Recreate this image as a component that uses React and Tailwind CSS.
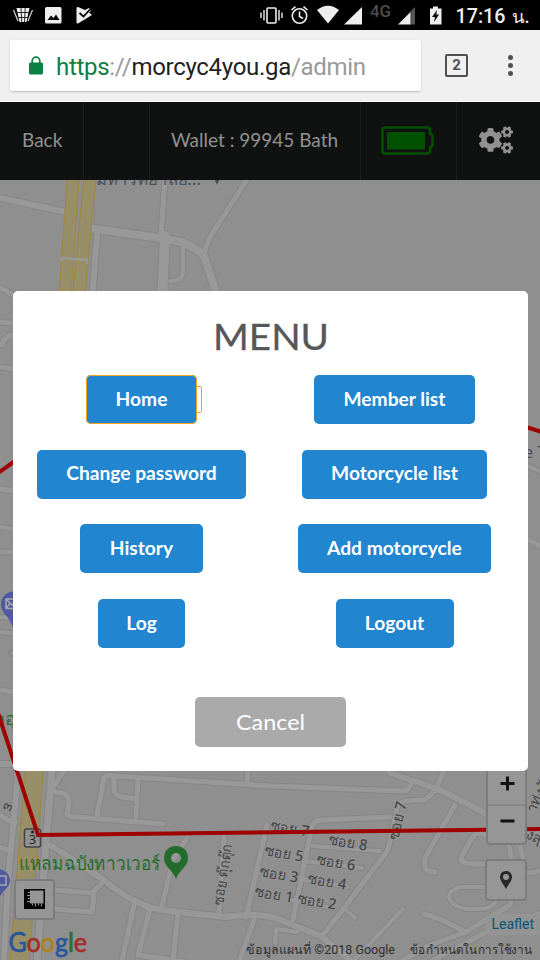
import React from 'react';
import { FaCogs } from 'react-icons/fa';

const roads = [
  ['M0 198L66 212', 6], ['M88 228L160 238Q190 241 204 256L222 310', 8], ['M97 235L92 300', 6],
  ['M165 180L161 235', 5], ['M165 236L162 300', 10], ['M183 240V272Q183 281 170 281', 4],
  ['M248 178L210 237L204 253', 5], ['M92 210L91 228', 4], ['M0 288Q10 293 14 296', 5],
  ['M0 322L20 324', 5], ['M2 345Q4 334 20 334', 5], ['M0 367L20 370', 5], ['M0 489L20 492', 5],
  ['M0 527L20 530', 4], ['M0 552H20', 4], ['M0 617L20 619', 4], ['M0 632L20 634', 4], ['M0 690L20 693', 5],
  ['M528 466L545 474', 4], ['M526 538L545 549', 5],
  ['M0 764H16Q18 768 17 785L8 880L4 960', 6], ['M0 815Q8 822 16 822M0 847L12 851', 5],
  ['M52 770L47 830L37 960', 7], ['M65 770L50 791L63 793Q70 796 69 803L67 814Q68 817 76 817L163 824', 5],
  ['M97 815L104 778Q106 774 116 776L270 786L405 791Q410 789 412 781', 5],
  ['M114 778V790Q114 795 122 797L136 799M138 779L136 817M248 770L247 784', 5],
  ['M50 845L104 880Q130 903 160 910L226 917Q267 911 288 923L321 936L350 960', 6],
  ['M161 910L173 860L187 838', 5], ['M219 912L224 835', 5], ['M246 917L267 825', 5],
  ['M293 920L312 826Q315 820 322 820L390 817', 5],
  ['M312 846L380 851M304 861L362 868M297 878L348 887M292 900L332 908', 4],
  ['M322 936L344 908L388 850L398 804Q402 800 425 800L436 790L444 770', 5],
  ['M344 908L355 918M403 909L354 960M298 932L276 929L275 943', 4],
  ['M55 890L92 893L103 882M55 909L92 912L94 894', 5], ['M134 905L122 960M150 909L138 955L185 962M178 913L173 960M254 920L239 962', 5],
  ['M390 773L440 790L493 817L540 835', 6], ['M455 805L426 856Q420 872 435 872', 5],
  ['M493 837L477 833Q474 832 461 858Q460 864 475 864H493M505 838Q512 848 511 865', 5],
  ['M492 887H460Q446 892 450 900Q456 910 477 909Q495 910 500 894', 4],
  ['M424 914L440 919L466 932L430 945L400 962M466 932L510 905L518 875L545 870M518 835L525 870', 5],
];
const side = 'M430 962L490 930L545 912';

const labels = [
  ['ซอย 7', 270, 830, 10], ['ซอย 8', 328, 844, 10], ['ซอย 5', 264, 855, 10], ['ซอย 6', 316, 864, 10],
  ['ซอย 3', 259, 876, 10], ['ซอย 4', 307, 883, 10], ['ซอย 1', 254, 896, 10], ['ซอย 2', 297, 903, 10],
];

function MapCanvas() {
  return (
    <svg className="absolute inset-0 h-[780px] w-[540px]" viewBox="0 180 540 780" fontFamily="'Noto Sans','Noto Sans CJK SC',sans-serif">
      <rect y="180" width="540" height="780" fill="#8f8f8f" />
      <g fill="none" strokeLinecap="round" strokeLinejoin="round">
        <g stroke="#868686">
          <path d={side} strokeWidth="7" />
          {roads.map(([d, w]) => <path key={d} d={d} strokeWidth={w + 2} />)}
        </g>
        <g stroke="#989898">
          <path d={side} strokeWidth="5" />
          {roads.map(([d, w]) => <path key={d} d={d} strokeWidth={w} />)}
        </g>
      </g>
      <g fill="#978f68" stroke="#a38439" strokeWidth="1">
        <path d="M67.500 178L58.500 300H70.500L79 178Z" />
        <path d="M84 178L72 300H84.500L96 178Z" />
        <path d="M26 760L10 962H29L44 760Z" />
      </g>
      <path d="M62 261V258L87 260V264" fill="none" stroke="#999" strokeWidth="2.500" />
      <g fill="#46525e" fontSize="17">
        <text x="96" y="184.500" fontWeight="500" textLength="105" lengthAdjust="spacingAndGlyphs">มหาวิทยาลัย...</text>
        <path d="M214 178H220L217 185Z" />
        <text x="524" y="458" fontSize="16">e T</text>
      </g>
      <g fill="#505aa0">
        <path d="M13 591.500A12.500 12.500 0 0 0 1 605C1 613 9 615 13 628Z" />
        <path d="M-2 869A12 12 0 0 1 10 881C9 889 2 890 0 897H-2Z" />
      </g>
      <g fill="none" stroke="#aaa" strokeWidth="1.500">
        <path d="M6 599H18V608.500H6ZM6 599L12 605L18 599M6 608.500L10 603.500" />
        <path d="M-2 876H6V885H-2" />
        <circle cx="12" cy="653" r="3.500" strokeWidth="1" stroke="#808080" />
      </g>
      <g fontSize="15" fontWeight="500" fill="#434343" stroke="#999" strokeWidth="1.500" paintOrder="stroke">
        {labels.map(([t, x, y, r]) => (
          <text key={t} x={x} y={y} transform={`rotate(${r} ${x} ${y})`} textLength="39" lengthAdjust="spacingAndGlyphs">{t}</text>
        ))}
        <text transform="translate(398 841) rotate(-77)" textLength="39" lengthAdjust="spacingAndGlyphs">ซอย 7</text>
        <text transform="translate(223 906) rotate(-81)" textLength="62" lengthAdjust="spacingAndGlyphs">ซอย ตุ๊กตุ๊ก</text>
        <text transform="translate(2 808) rotate(25)" fontSize="14">๓</text>
        <text transform="translate(535 814) rotate(-65)">าทุ่งรั</text>
        <text transform="translate(525 838) rotate(22)">งสุข</text>
      </g>
      <g fill="#246c2b" fontWeight="500">
        <text x="-5" y="725" fontSize="18">าอุ</text>
        <text x="19" y="870" fontSize="19" textLength="141" lengthAdjust="spacingAndGlyphs">แหลมฉบังทาวเวอร์</text>
        <path fillRule="evenodd" d="M176 846C168 846 164 852 164 858C164 867 173 870 176 879C179 870 188 867 188 858C188 852 184 846 176 846ZM176 853A5 5 0 1 1 176 863A5 5 0 1 1 176 853Z" />
      </g>
      <rect x="24.500" y="829" width="16" height="18" rx="2" fill="#929292" stroke="#444" strokeWidth="1.500" />
      <text x="32.500" y="843.500" textAnchor="middle" fontSize="13" fill="#222">3</text>
      <circle cx="32.500" cy="832" r="1.500" fill="#222" />
      <path d="M-2 473L15 461M526 427L542 432M-2 713L38 835L542 829" fill="none" stroke="#9f0000" strokeWidth="4" />
    </svg>
  );
}

function StatusBar() {
  return (
    <header className="flex h-[30px] shrink-0 bg-black">
      <svg className="h-[30px] w-[540px]" viewBox="0 0 540 30" fill="#eee">
        <path d="M16.500 8H29.500L26.500 22H19.500Z" />
        <path d="M16 12.500H30M17 17.500H29M21 8L21.700 22M25.200 8L24.500 22" stroke="#000" strokeWidth=".8" />
        <path d="M13.500 10L18 21M32.500 10L28 21" stroke="#ccc" strokeWidth="1.300" />
        <rect x="45" y="7" width="16.500" height="16.500" rx="1.500" />
        <path d="M47.500 20L51 15.500L53.500 18L56 14.500L59.500 20Z" fill="#000" />
        <path d="M78 7L85 10L89 8L91 11L89 12.500L92 15L78 23.500Q76.500 24 76.500 22V8.500Q76.500 6.500 78 7Z" />
        <path d="M79.500 13L83.500 16.500L90 9.500" fill="none" stroke="#000" strokeWidth="1.800" />
        <path d="M261 12.500V18M264 10V20.500M279 10V20.500M282 12.500V18" stroke="#eee" strokeWidth="1.400" />
        <rect x="267" y="8" width="9" height="15" rx="1" fill="none" stroke="#eee" strokeWidth="1.600" />
        <g fill="none" stroke="#eee" strokeWidth="1.600">
          <circle cx="299.500" cy="16" r="7.200" />
          <path d="M299.500 11.500V16.500L303 18.500M291.500 10L295.500 6.700M307.500 10L303.500 6.700" />
        </g>
        <path d="M317 10Q328 1.500 339 10L328 23.500Z" />
        <path d="M344 24.500L362 7V24.500Z" />
        <text x="370" y="16.500" fill="#4d4d4d" fontFamily="Roboto, sans-serif" fontWeight="500" fontSize="16" textLength="21" lengthAdjust="spacingAndGlyphs">4G</text>
        <path d="M410.500 11.500L415 7V24.500H410.500Z" fill="#555" />
        <path d="M398 24.500L410.500 12V24.500Z" />
        <path d="M430 8.500H433V6.500H438V8.500H441.500V24.500H430Z" />
        <path d="M437 10L432 17H435L434 22L439 14.500H436.300Z" fill="#000" />
        <text x="455.500" y="22.500" fontFamily="Roboto, sans-serif" fontWeight="500" fontSize="20" textLength="50" lengthAdjust="spacingAndGlyphs">17:16</text>
        <text x="511.500" y="22.500" fontFamily="'Noto Sans', sans-serif" fontWeight="500" fontSize="17" textLength="18" lengthAdjust="spacingAndGlyphs">น.</text>
      </svg>
    </header>
  );
}

function AddressBar() {
  return (
    <div className="flex h-[72px] shrink-0 items-center border-b border-white bg-[#f0f0f0] pl-[10px] font-['Roboto',sans-serif]">
      <div className="flex h-[51px] w-[411px] items-center rounded-xs bg-white pl-[18px] shadow-[0_1px_2px_#bbb]">
        <svg className="mb-[1px] h-[19px] w-[16px]" viewBox="0 0 16 19">
          <rect x="1" y="6.500" width="14" height="12" rx="1.500" fill="#0b8043" />
          <path d="M4.200 8V5A3.800 3.800 0 0 1 11.800 5V8" fill="none" stroke="#0b8043" strokeWidth="1.700" />
        </svg>
        <span className="mt-[2px] ml-[12px] whitespace-nowrap text-[24px] leading-[30px] tracking-[-0.300px] text-[#999]">
          <span className="text-[#0b8043]">https</span>://<span className="text-[#222]">morcyc4you.ga</span>/admin
        </span>
      </div>
      <div className="ml-[24px] flex size-[23px] items-center justify-center rounded-[2px] border-2 border-[#505050] text-[15px] font-bold text-[#505050]">2</div>
      <div className="ml-[40px] flex flex-col gap-[3px]">
        <i className="size-[5px] rounded-full bg-[#505050]" /><i className="size-[5px] rounded-full bg-[#505050]" /><i className="size-[5px] rounded-full bg-[#505050]" />
      </div>
    </div>
  );
}

function NavBar() {
  return (
    <nav className="flex h-[78px] shrink-0 items-stretch bg-[#101111] text-[19px] text-[#919191]">
      <div className="flex w-[84px] items-center border-r border-[#1c1d1d] pb-[1px] pl-[22px]">Back</div>
      <div className="w-[66px] border-r border-[#1c1d1d]" />
      <div className="flex w-[211px] items-center border-r border-[#1c1d1d] pb-[1px] pl-[21px] whitespace-nowrap">Wallet : 99945 Bath</div>
      <div className="flex w-[96px] items-center border-r border-[#1c1d1d] pb-[1px] pl-[20px]">
        <svg className="h-[29px] w-[53px]" viewBox="0 0 53 29">
          <path d="M3 1.500H46Q49 1.500 49 4V8Q51.500 8 51.500 10V19Q51.500 21 49 21V25Q49 27.500 46 27.500H3.500Q1.500 27.500 1.500 25V4Q1.500 1.500 3.500 1.500Z" fill="none" stroke="#005000" strokeWidth="2.600" />
          <path d="M6 6H44V23.500H6Z" fill="#005000" />
        </svg>
      </div>
      <div className="flex flex-1 items-center pb-[2px] pl-[22px]"><FaCogs className="h-[34px] w-[34px]" /></div>
    </nav>
  );
}

const button = 'flex h-[49px] items-center justify-center rounded-[5px] bg-[#2185d0] pb-[1px] text-[19.200px] font-bold text-white whitespace-nowrap';

function Menu() {
  return (
    <section className="absolute left-[13px] top-[111px] flex h-[480px] w-[515px] flex-col items-center rounded-[5px] bg-white pt-[26px]">
      <h1 className="flex h-[40px] items-center justify-center">
        <svg className="h-[40px] w-[120px]" viewBox="0 0 120 40">
          <text x="2" y="32.500" fill="#575757" fontFamily="Lato, sans-serif" fontWeight="400" fontSize="37" stroke="#575757" strokeWidth="0.300" textLength="116" lengthAdjust="spacingAndGlyphs">MENU</text>
        </svg>
      </h1>
      <div className="mt-[18px] flex w-full justify-between pl-[24px] pr-[37px]">
        <div className="flex w-[209px] flex-col items-center gap-[25.700px]">
          <div className="relative">
            <button className={`${button} w-[111px] outline-1 -outline-offset-1 outline-[#f5a31a]`}>Home</button>
            <i className="absolute left-[111px] top-[11px] h-[27px] w-[5px] rounded-r-[2px] border border-l-0 border-[#f0a020]" />
          </div>
          <button className={`${button} w-[209px]`}>Change password</button>
          <button className={`${button} w-[123px]`}>History</button>
          <button className={`${button} w-[87px]`}>Log</button>
        </div>
        <div className="flex w-[193px] flex-col items-center gap-[25.700px]">
          <button className={`${button} w-[161px]`}>Member list</button>
          <button className={`${button} w-[185px]`}>Motorcycle list</button>
          <button className={`${button} w-[193px]`}>Add motorcycle</button>
          <button className={`${button} w-[118px]`}>Logout</button>
        </div>
      </div>
      <button className="mt-[49px] flex h-[50px] w-[151px] items-center justify-center rounded-[5px] bg-[#aaa]">
        <svg className="h-[30px] w-[72px]" viewBox="0 0 72 30">
          <text x="1" y="22.500" fill="#fff" fontFamily="Lato, sans-serif" fontSize="21" textLength="69" lengthAdjust="spacingAndGlyphs">Cancel</text>
        </svg>
      </button>
    </section>
  );
}

function Controls() {
  return (
    <>
      <div className="absolute left-[486px] top-[563px] flex h-[102px] w-[41px] flex-col rounded-[4px] border-2 border-[#7c7c7c] bg-[#969696]">
        <svg className="h-[98px] w-[37px]" viewBox="0 0 37 98"><path d="M0 60H37" stroke="#777" /><path d="M12.500 38.500H26.500M19.500 31.500V45.500M12.500 76H26.500" stroke="#111" strokeWidth="3" /></svg>
      </div>
      <div className="absolute left-[485px] top-[679px] flex size-[42px] items-center justify-center rounded-[4px] border-2 border-[#7c7c7c] bg-[#969696]">
        <svg className="h-[20px] w-[14px]" viewBox="0 0 14 20"><path fill="#292929" fillRule="evenodd" d="M7 1C3 1 1 4 1 7C1 11 4.500 14 7 19C9.500 14 13 11 13 7C13 4 11 1 7 1ZM7 4A3 3 0 1 1 7 10A3 3 0 1 1 7 4Z" /></svg>
      </div>
      <div className="absolute left-[14px] top-[699px] flex size-[41px] items-center justify-center rounded-[4px] border-2 border-[#7c7c7c] bg-[#969696]">
        <svg className="size-[21px]" viewBox="0 0 21 21">
          <path fillRule="evenodd" d="M0 0H21V20H0ZM6 1.500V14.500H19.500V1.500Z" fill="#050505" />
          <path d="M4 3.500H6M3 6.500H6M4 9.500H6M3 12.500H6M8.500 14.500V16.500M11.500 14.500V17.500M14.500 14.500V16.500M17.500 14.500V17.500" stroke="#969696" />
        </svg>
      </div>
      <svg className="absolute left-[8px] top-[747px] h-[34px] w-[84px]" viewBox="0 0 84 34">
        <text x="0.500" y="24.500" fontFamily="Lato, sans-serif" fontSize="26" strokeWidth="0.700" textLength="78.500" lengthAdjust="spacingAndGlyphs">
          <tspan fill="#28569c" stroke="#28569c">G</tspan><tspan fill="#a32f27" stroke="#a32f27">o</tspan><tspan fill="#ae8216" stroke="#ae8216">o</tspan><tspan fill="#28569c" stroke="#28569c">g</tspan><tspan fill="#287039" stroke="#287039">l</tspan><tspan fill="#a32f27" stroke="#a32f27">e</tspan>
        </text>
      </svg>
      <svg className="absolute left-[240px] top-[730px] h-[50px] w-[300px]" viewBox="240 910 300 50" fontFamily="Roboto, 'Noto Sans', sans-serif" fill="#303030" fontSize="12.500">
        <path d="M486 914H540V935H486Z" fill="#949494" />
        <text x="491.500" y="928.500" fill="#075577" fontSize="14" textLength="42.500" lengthAdjust="spacingAndGlyphs">Leaflet</text>
        <text x="246" y="954" textLength="149" lengthAdjust="spacingAndGlyphs">ข้อมูลแผนที่ ©2018 Google</text>
        <text x="410" y="954" textLength="122" lengthAdjust="spacingAndGlyphs">ข้อกำหนดในการใช้งาน</text>
      </svg>
    </>
  );
}

export default function App() {
  return (
    <div className="flex h-[960px] w-[540px] flex-col overflow-hidden font-['Lato',sans-serif]">
      <StatusBar />
      <AddressBar />
      <NavBar />
      <main className="relative h-[780px] shrink-0 overflow-hidden">
        <MapCanvas />
        <Controls />
        <Menu />
      </main>
    </div>
  );
}
